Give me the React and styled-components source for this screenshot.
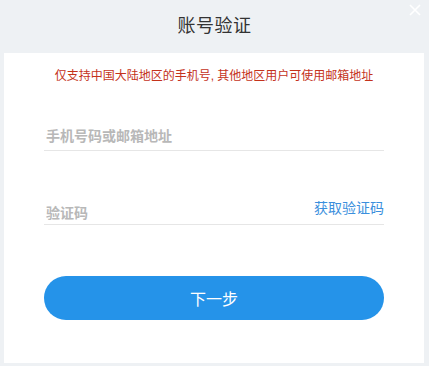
import React from 'react'
import styled, { createGlobalStyle } from 'styled-components'

const GlobalStyle = createGlobalStyle`
    html, body {
        margin: 0;
        padding: 0;
        background: #eef1f4;
        font-family: "Liberation Sans", "Noto Sans CJK SC", sans-serif;
    }
`

const Dialog = styled('div')(() => ({
    position: 'relative',
    width: '429px',
    height: '366px',
    display: 'flex',
    flexDirection: 'column',
    background: '#eef1f4',
}))

const Header = styled('div')(() => ({
    height: '53px',
    display: 'flex',
    alignItems: 'center',
    justifyContent: 'center',
}))

const Title = styled('h3')(() => ({
    margin: 0,
    paddingBottom: '5px',
    fontSize: '18px',
    fontWeight: 'normal',
    color: '#333',
    letterSpacing: '0.5px',
}))

const CloseButton = styled('button')(() => ({
    position: 'absolute',
    top: '2px',
    right: '6px',
    width: '16px',
    height: '16px',
    padding: 0,
    border: 'none',
    background: 'transparent',
    cursor: 'pointer',
}))

const Panel = styled('div')(() => ({
    flex: 1,
    margin: '0 5px 3px 4px',
    padding: '14px 40px 0',
    background: '#fff',
    display: 'flex',
    flexDirection: 'column',
}))

const Notice = styled('p')(() => ({
    margin: 0,
    fontSize: '12px',
    lineHeight: '18px',
    textAlign: 'center',
    color: '#c4321b',
}))

const Field = styled('div')(({ $top, $pad }) => ({
    marginTop: `${$top}px`,
    height: '31px',
    boxSizing: 'border-box',
    display: 'flex',
    alignItems: 'flex-end',
    justifyContent: 'space-between',
    paddingBottom: `${$pad}px`,
    borderBottom: '1px solid #e6e6e6',
}))

const Input = styled('input')(() => ({
    flex: 1,
    minWidth: 0,
    height: '20px',
    padding: '0 0 0 2px',
    border: 'none',
    outline: 'none',
    fontFamily: 'inherit',
    fontSize: '14px',
    color: '#333',
    '&::placeholder': {
        color: '#b8b8b8',
        fontWeight: 'bold',
    },
}))

const CodeLink = styled('a')(() => ({
    marginBottom: '5px',
    fontSize: '14px',
    lineHeight: '20px',
    color: '#3b8fdd',
    textDecoration: 'none',
    cursor: 'pointer',
}))

const SubmitButton = styled('button')(() => ({
    marginTop: '51px',
    height: '44px',
    border: 'none',
    borderRadius: '22px',
    background: '#2593e9',
    color: '#fff',
    fontFamily: 'inherit',
    fontSize: '16px',
    cursor: 'pointer',
}))

const App = () => {
    return (
        <>
            <GlobalStyle />
            <Dialog>
                <Header>
                    <Title>账号验证</Title>
                </Header>
                <CloseButton aria-label="close">
                    <svg width="16" height="16" viewBox="0 0 16 16">
                        <path d="M3 3 L13 13 M13 3 L3 13" stroke="#fff" strokeWidth="1.6" />
                    </svg>
                </CloseButton>
                <Panel>
                    <Notice>仅支持中国大陆地区的手机号, 其他地区用户可使用邮箱地址</Notice>
                    <Field $top={35} $pad={4}>
                        <Input placeholder="手机号码或邮箱地址" />
                    </Field>
                    <Field $top={43} $pad={1}>
                        <Input placeholder="验证码" />
                        <CodeLink>获取验证码</CodeLink>
                    </Field>
                    <SubmitButton>下一步</SubmitButton>
                </Panel>
            </Dialog>
        </>
    )
}

export default App
